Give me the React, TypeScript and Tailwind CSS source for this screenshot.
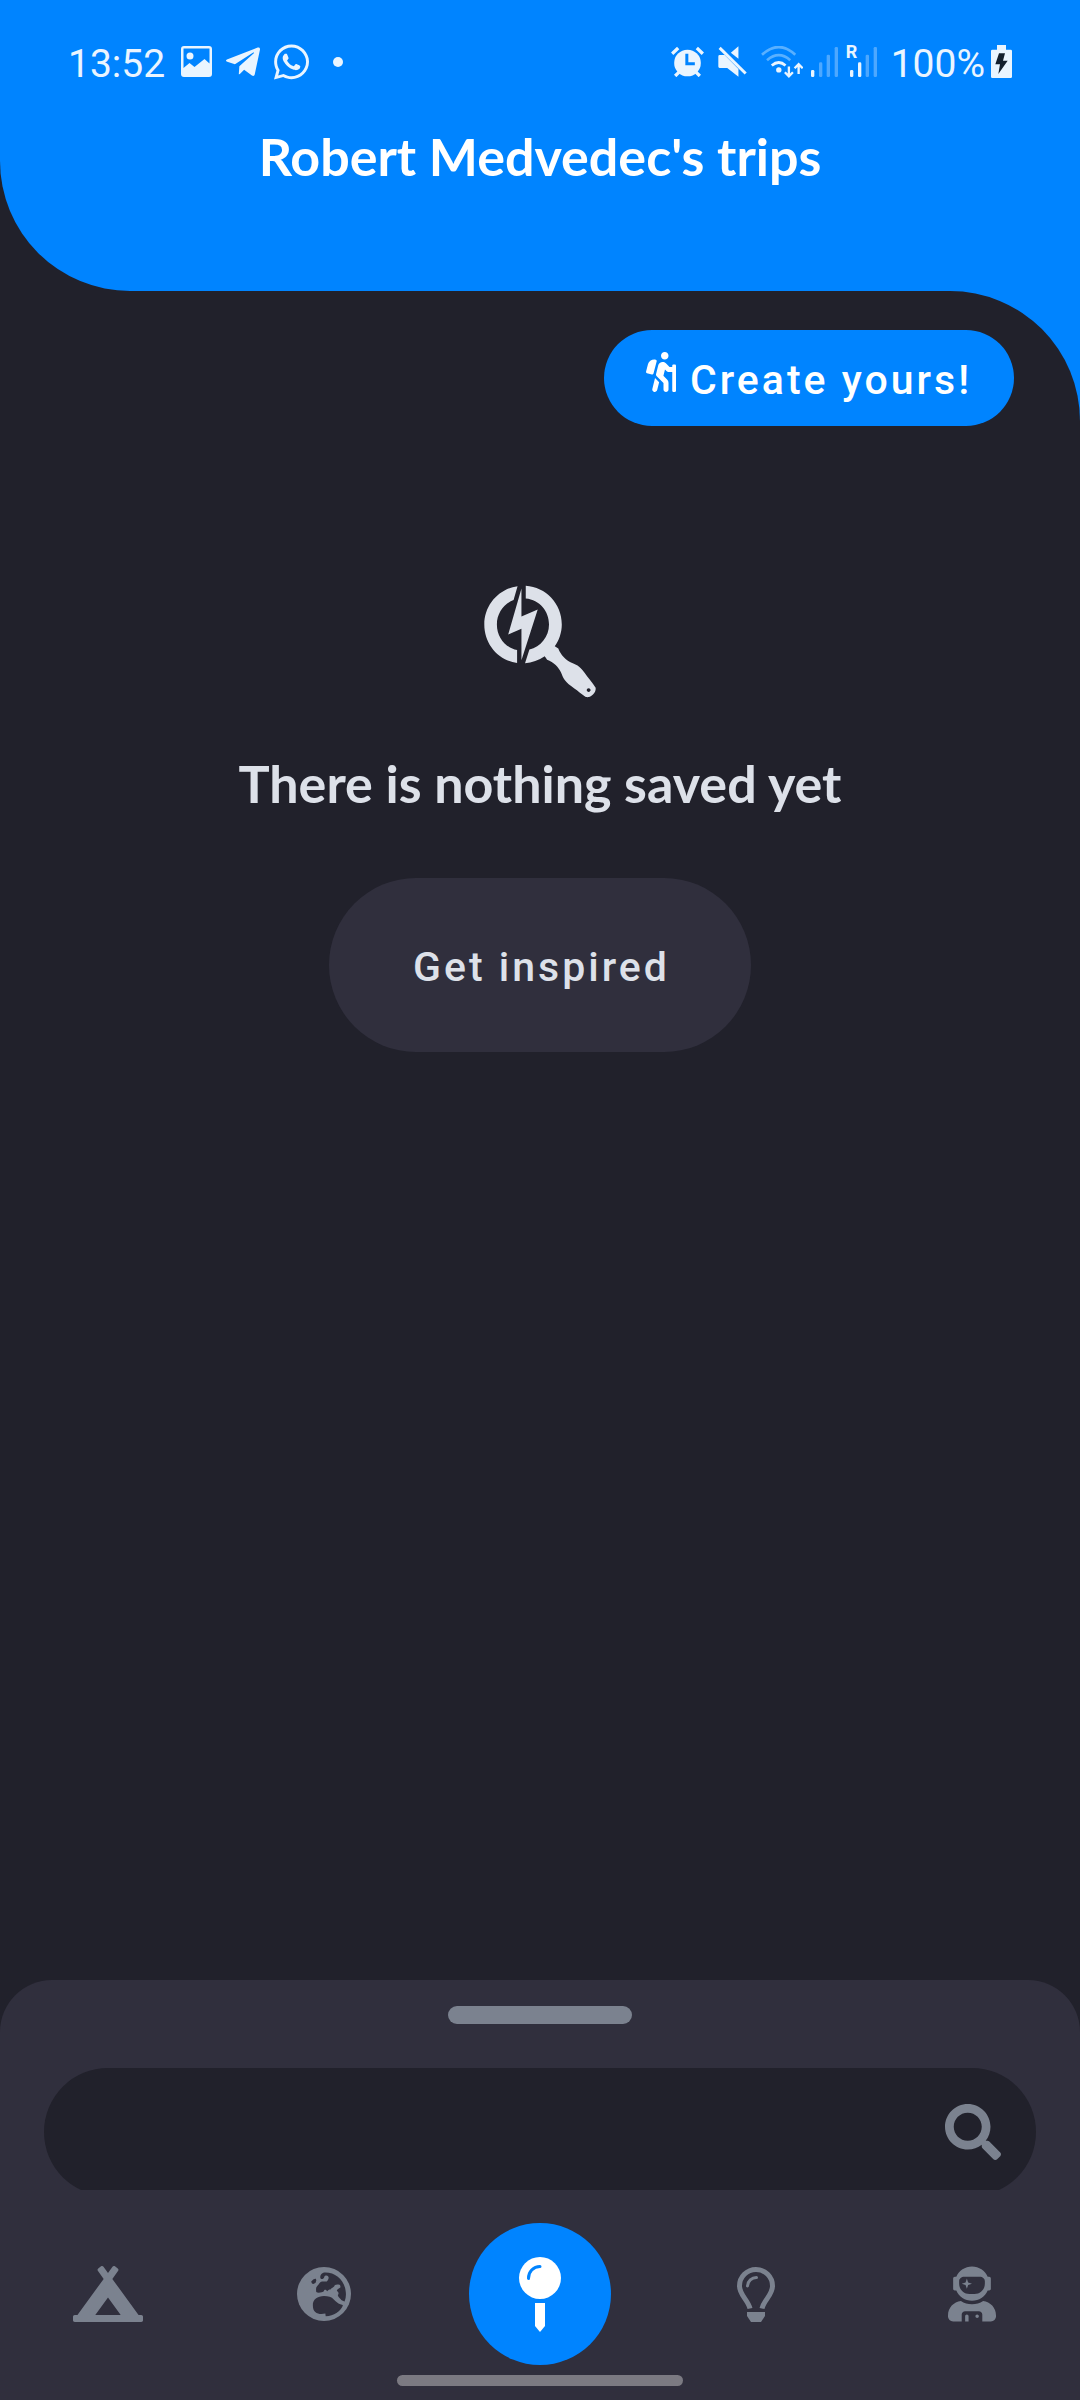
import type { ReactNode } from "react";
import { FaCampground, FaHiking, FaSearch, FaSearchengin, FaTelegramPlane, FaUserAstronaut, FaWhatsapp } from "react-icons/fa";

function GalleryIcon() {
  return (
    <svg viewBox="0 0 62 62" className="size-[31px]" aria-hidden="true">
      <path
        fill="currentColor"
        fillRule="evenodd"
        d="M6 0h50a6 6 0 0 1 6 6v50a6 6 0 0 1-6 6H6a6 6 0 0 1-6-6V6a6 6 0 0 1 6-6zM5 5v39l12-10 10 8 20-16 10 9V5zM18 13a7 7 0 1 1 0 14 7 7 0 0 1 0-14z"
      />
    </svg>
  );
}

function AlarmIcon() {
  return (
    <svg viewBox="0 0 98 93" className="h-[31px] w-[33px]" aria-hidden="true">
      <circle cx="49" cy="51" r="40" fill="currentColor" />
      <path d="M3 23 21 6M77 6l18 17M12 90l14-14M72 76l14 14" stroke="currentColor" strokeWidth="10" />
      <path d="M47 23v30h24" fill="none" stroke="#0084ff" strokeWidth="9" />
    </svg>
  );
}

function MuteIcon() {
  return (
    <svg viewBox="0 0 88 93" className="h-[31px] w-[29px]" aria-hidden="true">
      <path d="M5 27h15l42 42v24L28 66H5a4 4 0 0 1-4-4V31a4 4 0 0 1 4-4zM62 0v38L39 20z" fill="currentColor" />
      <path d="m5 5 79 78" stroke="currentColor" strokeWidth="9" />
    </svg>
  );
}

function WifiIcon() {
  return (
    <svg viewBox="0 0 125 95" className="h-8 w-[42px]" aria-hidden="true" fill="none" strokeWidth="8">
      <path d="M3 26Q53-20 102 26M18 42q35-30 69 0" stroke="#59b0ff" />
      <path d="M32 58q21-18 41 0" stroke="currentColor" />
      <circle cx="53" cy="71" r="8" fill="currentColor" />
      <path d="M83 61v27M71 78l12 12 12-12M112 83V56M100 66l12-12 12 12" stroke="currentColor" strokeWidth="7" />
    </svg>
  );
}

function SignalBars({ level }: { level: number }) {
  const bars = [
    { x: 0, y: 69 },
    { x: 24, y: 46 },
    { x: 47, y: 23 },
    { x: 71, y: 0 },
  ];
  return (
    <svg viewBox="0 0 81 90" className="h-[30px] w-[27px]" aria-hidden="true">
      {bars.map((b, i) => (
        <rect key={b.x} x={b.x} y={b.y} width="10" height={90 - b.y} rx="4" fill={i < level ? "currentColor" : "#4da8ff"} />
      ))}
    </svg>
  );
}

function BatteryIcon() {
  return (
    <svg viewBox="0 0 63 99" className="h-[33px] w-[21px]" aria-hidden="true">
      <path d="M18 0h27v14h14a4 4 0 0 1 4 4v77a4 4 0 0 1-4 4H4a4 4 0 0 1-4-4V18a4 4 0 0 1 4-4h14z" fill="currentColor" />
      <path d="M24 25h18l-6 22h14L22 87l5-29H13z" fill="#14202e" />
    </svg>
  );
}

function GlobeIcon() {
  return (
    <svg viewBox="0 0 160 160" className="size-[54px]" aria-hidden="true">
      <circle cx="80" cy="80" r="80" fill="currentColor" />
      <g fill="#302f3d">
        <path d="M43 42q7-8 13-7 3 4-1 12-7 6-11 1-2-3-1-6z" />
        <path d="M69 32C68 22 75 16 84 16c30 0 56 22 60 54 2 12 1 22-3 32-6-1-9-3-12-7-4-5-8-7-8-12 4-4 2-9-3-13 1-5 8-6 11-10-1-6-1-8-6-8-8-1-12 1-13 6-4 4-8 4-11 9-5 0-7 2-9 5-3-4-6-6-9-4-1 5-5 6-8 7-6 1-12 2-16-1-1-8-1-14 3-18 6-6 8-12 14-13 7-1 14 3 17-4 5-7 3-13-4-14-5-1-6 3-7 7-3 5-10 5-11 0z" />
        <path d="M47 113c-1-16 14-27 33-27 12 0 23 2 29 10 6 6 12 12 19 14 4 1 7 1 8 4-8 18-26 31-51 32l-1-8c-12 2-22 2-30-5-5-5-7-11-7-20z" />
      </g>
    </svg>
  );
}

function PinIcon() {
  return (
    <svg viewBox="0 0 84 150" className="h-[75px] w-[42px]" aria-hidden="true">
      <circle cx="42" cy="42" r="42" fill="#fff" />
      <path d="M19 43a23 23 0 0 1 23-24" fill="none" stroke="#0084ff" strokeWidth="6" strokeLinecap="round" />
      <path d="M32 92h20v46l-10 12-10-12z" fill="#fff" />
    </svg>
  );
}

function BulbIcon() {
  return (
    <svg viewBox="0 0 76 110" className="h-[55px] w-[38px]" aria-hidden="true" fill="none" stroke="currentColor">
      <path d="M26 83C22 66 5 56 5 38a33 33 0 0 1 66 0c0 18-17 28-21 45" strokeWidth="10" />
      <path d="M21 38a18 18 0 0 1 18-17" strokeWidth="6" strokeLinecap="round" />
      <path d="M20 90h36v8l-8 12H28l-8-12z" fill="currentColor" stroke="none" />
    </svg>
  );
}

function NavItem({ label, children }: { label: string; children: ReactNode }) {
  return (
    <a href="#" aria-label={label} className="flex h-full items-center justify-center text-[#7b828f]">
      {children}
    </a>
  );
}

function StatusBar() {
  return (
    <div className="flex h-[123px] items-center justify-between px-[68px] text-[39px] leading-[46px] text-[#eaf5ff]">
      <div className="flex items-center">
        <span className="pt-1">13:52</span>
        <div className="ml-4 flex items-center gap-[14px]">
          <GalleryIcon />
          <FaTelegramPlane className="h-10 w-[34px]" />
          <FaWhatsapp className="h-10 w-[35px]" />
        </div>
        <span className="ml-6 size-[10px] rounded-full bg-current" />
      </div>
      <div className="flex items-center">
        <AlarmIcon />
        <span className="ml-[14px] flex"><MuteIcon /></span>
        <span className="ml-[14px] flex"><WifiIcon /></span>
        <span className="ml-2 flex"><SignalBars level={1} /></span>
        <span className="relative ml-3 mr-[14px] flex">
          <SignalBars level={2} />
          <span className="absolute -left-1 -top-1 text-lg leading-none font-bold">R</span>
        </span>
        <span className="pt-1">100%</span>
        <span className="ml-1.5 flex"><BatteryIcon /></span>
      </div>
    </div>
  );
}

export default function App() {
  return (
    <div className="flex min-h-screen flex-col bg-[#21212b] font-['Roboto',sans-serif]">
      <header className="rounded-bl-[130px] bg-[#0084ff] pb-[102px]">
        <StatusBar />
        <h1 className="text-center font-['Lato',sans-serif] text-[52px] leading-[66px] font-bold text-white">
          Robert Medvedec's trips
        </h1>
      </header>

      <div className="flex flex-1 flex-col bg-[#0084ff]">
        <main className="flex flex-1 flex-col rounded-tr-[130px] bg-[#21212b] pt-[39px]">
          <button className="mr-[66px] flex h-24 items-center gap-[14px] self-end rounded-full bg-[#0084ff] px-[42px] pt-1 text-[41px] leading-[48px] font-medium tracking-[3px] text-white">
            <FaHiking className="mb-4 h-10 w-[30px]" />
            Create yours!
          </button>

          <section className="mt-[152px] flex flex-col items-center text-[#dde1e9]">
            <FaSearchengin className="size-[124px]" />
            <h2 className="mt-[45px] font-['Lato',sans-serif] text-[52px] leading-[72px] font-bold">
              There is nothing saved yet
            </h2>
            <button className="mt-[59px] h-[174px] rounded-full bg-[#302f3d] pt-1 pr-[81px] pl-[84px] text-[41px] leading-[48px] font-medium tracking-[3px]">
              Get inspired
            </button>
          </section>
        </main>
      </div>

      <div className="bg-[#21212b]">
        <footer className="rounded-t-[52px] bg-[#302f3d] pt-[26px] pb-[14px]">
          <div className="mx-auto h-[18px] w-[184px] rounded-full bg-[#7b828f]" />
          <div className="mx-11 mt-11 h-[122px] overflow-hidden">
            <form className="flex h-32 items-center rounded-full bg-[#21212b] pr-[35px] pl-16">
              <input type="search" aria-label="Search trips" className="h-full min-w-0 flex-1 bg-transparent text-[41px] text-[#dde1e9] outline-none" />
              <button type="button" aria-label="Search" className="text-[#7b828f]">
                <FaSearch className="size-14" />
              </button>
            </form>
          </div>
          <nav className="mt-[33px] grid h-[142px] grid-cols-5">
            <NavItem label="Camp"><FaCampground className="h-14 w-[70px]" /></NavItem>
            <NavItem label="Explore"><GlobeIcon /></NavItem>
            <NavItem label="Trips">
              <span className="flex size-[142px] items-center justify-center rounded-full bg-[#0084ff]"><PinIcon /></span>
            </NavItem>
            <NavItem label="Ideas"><BulbIcon /></NavItem>
            <NavItem label="Profile"><FaUserAstronaut className="h-14 w-12" /></NavItem>
          </nav>
          <div className="mx-auto mt-[10px] h-[11px] w-[286px] rounded-full bg-[#7b7a82]" />
        </footer>
      </div>
    </div>
  );
}
